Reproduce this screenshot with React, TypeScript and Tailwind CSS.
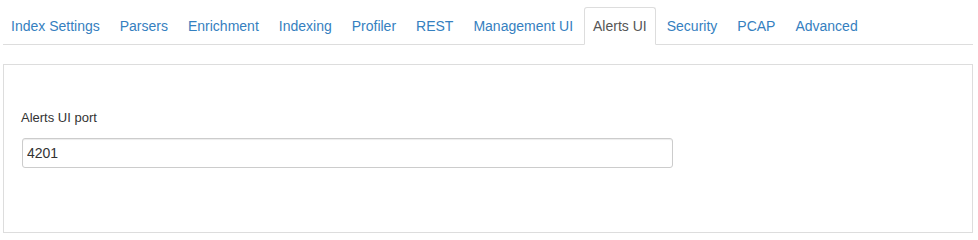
const tabs = [
  "Index Settings",
  "Parsers",
  "Enrichment",
  "Indexing",
  "Profiler",
  "REST",
  "Management UI",
  "Alerts UI",
  "Security",
  "PCAP",
  "Advanced",
];

export default function App() {
  const active = "Alerts UI";

  return (
    <div className="min-h-[240px] bg-white pt-[7px] pl-[3px] font-['Liberation_Sans',Arial,sans-serif]">
      <ul className="flex w-[970px] border-b border-[#ddd]">
        {tabs.map((tab, i) => (
          <li key={tab} className={i === 0 ? "-mb-px -ml-px mr-[2px]" : "-mb-px mr-[2px]"}>
            {tab === active ? (
              <span className="block rounded-t-[3px] border border-[#ddd] border-b-white bg-white px-2 py-2 text-[14px] leading-[20px] text-[#555]">
                {tab}
              </span>
            ) : (
              <a
                href="#"
                className="block border border-transparent px-2 py-2 text-[14px] leading-[20px] text-[#3580c0]"
              >
                {tab}
              </a>
            )}
          </li>
        ))}
      </ul>

      <div className="mt-[19px] h-[169px] w-[970px] border border-[#ddd] px-[18px] pt-[43px]">
        <label className="-ml-px block text-[13px] leading-[19px] text-[#333]">
          Alerts UI port
        </label>
        <input
          type="text"
          defaultValue="4201"
          className="mt-[11px] h-[30px] w-[651px] rounded-[3px] border border-[#ccc] px-[4px] text-[14px] text-[#333] shadow-[inset_0_1px_1px_rgba(0,0,0,0.075)] outline-none"
        />
      </div>
    </div>
  );
}
